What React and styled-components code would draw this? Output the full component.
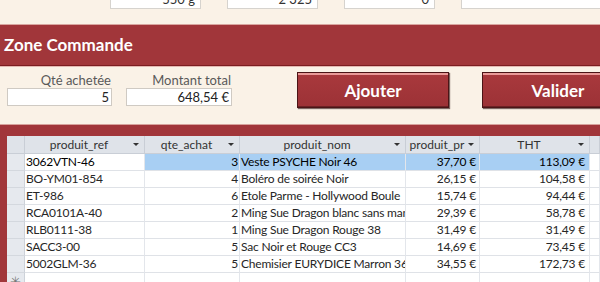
import styled, { createGlobalStyle } from "styled-components";

const GlobalStyle = createGlobalStyle`
  html, body {
    margin: 0;
    padding: 0;
    background: #faf2e7;
    overflow: hidden;
  }
  body {
    font-family: Lato, "Open Sans", sans-serif;
  }
`;

const Page = styled.div`
  width: 600px;
  height: 282px;
  overflow: hidden;
  background: #faf2e7;
`;

const TopStrip = styled.div`
  height: 9px;
  display: flex;
  align-items: flex-end;
  gap: 26px;
  padding-left: 110px;
  overflow: hidden;
`;

const TopBox = styled.div`
  flex: none;
  width: ${(p) => p.$width || 91}px;
  height: 20px;
  box-sizing: border-box;
  background: #fff;
  border: 1px solid #d6d3ce;
  font-size: 13px;
  line-height: 18px;
  text-align: right;
  padding-right: 5px;
  color: #333;
`;

const Band = styled.div`
  margin-top: 15px;
  height: 40px;
  background: #a1363a;
  border-top: 1px solid #d9a6a0;
  border-bottom: 1px solid #7c1d21;
  box-shadow: 0 1px 0 #e4b9b2;
  padding-left: 4px;
  color: #fff;
  font-size: 17px;
  font-weight: 700;
  line-height: 40px;
`;

const FormArea = styled.div`
  height: 52px;
  display: flex;
  align-items: flex-start;
  padding: 6px 0 0 7px;
`;

const Field = styled.div`
  flex: none;
  width: ${(p) => p.$width}px;
  margin-top: 1px;
  margin-right: ${(p) => p.$gap || 0}px;
  display: flex;
  flex-direction: column;
`;

const Label = styled.div`
  font-size: 13px;
  line-height: 14px;
  text-align: right;
  color: #595959;
  margin-bottom: 1px;
  padding-right: 1px;
`;

const Input = styled.div`
  height: 18px;
  box-sizing: border-box;
  background: #fff;
  border: 1px solid #cfcac3;
  font-size: 13px;
  line-height: 16px;
  text-align: right;
  padding-right: 2px;
  color: #222;
`;

const Buttons = styled.div`
  flex: none;
  display: flex;
  gap: 33px;
  margin-left: 65px;
`;

const Button = styled.button`
  flex: none;
  width: 152px;
  height: 36px;
  box-sizing: border-box;
  border: 1px solid #4b1416;
  background: linear-gradient(#a9393d, #9c3236);
  box-shadow: inset 0 2px 0 #e99a98, inset 0 -1px 0 #6b2224,
    1px 1px 1px rgba(40, 10, 10, 0.6);
  color: #fff;
  font-family: Lato, sans-serif;
  font-size: 17px;
  font-weight: 700;
  padding: 0;
  cursor: pointer;
`;

const TableSection = styled.div`
  height: 163px;
  box-sizing: border-box;
  background: #a1363a;
  border-top: 1px solid #d7a29c;
  padding: 11px 0 0 7px;
  overflow: hidden;
`;

const Sheet = styled.div`
  background: #fff;
  height: 100%;
  overflow: hidden;
`;

const COLS = "18px 120px 95px 166px 74px 110px 1fr";

const HeaderRow = styled.div`
  display: grid;
  grid-template-columns: ${COLS};
  height: 18px;
  background: #dfe3e9;
  border-bottom: 1px solid #c9ced6;
  box-sizing: border-box;
`;

const HeadCell = styled.div`
  display: flex;
  align-items: center;
  min-width: 0;
  border-right: 1px solid #c9ced6;
  font-size: 12px;
  color: #333;
  padding: 0 5px 0 3px;
`;

const HeadLabel = styled.span`
  flex: 1;
  min-width: 0;
  overflow: hidden;
  white-space: nowrap;
  text-align: center;
`;

const Arrow = styled.span`
  flex: none;
  width: 0;
  height: 0;
  margin-left: 3px;
  border-left: 3px solid transparent;
  border-right: 3px solid transparent;
  border-top: 3px solid #333;
`;

const Row = styled.div`
  display: grid;
  grid-template-columns: ${COLS};
  height: 17px;
`;

const Selector = styled.div`
  background: #e6e9ee;
  border-right: 1px solid #cdd2d9;
  border-bottom: 1px solid #d4d8de;
  display: flex;
  align-items: center;
  justify-content: center;
  color: #777;
  font-size: 13px;
`;

const Cell = styled.div`
  min-width: 0;
  overflow: hidden;
  white-space: nowrap;
  font-size: 12px;
  letter-spacing: -0.2px;
  line-height: 16px;
  color: ${(p) => (p.$current ? "#000" : "#262626")};
  background: ${(p) => (p.$selected ? "#a8cff3" : "#fff")};
  text-align: ${(p) => (p.$right ? "right" : "left")};
  padding: ${(p) => (p.$right ? `0 ${p.$pad ?? 1}px 0 0` : "0 0 0 1px")};
  border-right: 1px solid #e3e6eb;
  border-bottom: 1px solid #dfe2e7;
`;

const columns = ["produit_ref", "qte_achat", "produit_nom", "produit_pr", "THT"];

const rows = [
  ["3062VTN-46", "3", "Veste PSYCHE Noir 46", "37,70 €", "113,09 €"],
  ["BO-YM01-854", "4", "Boléro de soirée Noir", "26,15 €", "104,58 €"],
  ["ET-986", "6", "Etole Parme - Hollywood Boule", "15,74 €", "94,44 €"],
  ["RCA0101A-40", "2", "Ming Sue Dragon blanc sans manches", "29,39 €", "58,78 €"],
  ["RLB0111-38", "1", "Ming Sue Dragon Rouge 38", "31,49 €", "31,49 €"],
  ["SACC3-00", "5", "Sac Noir et Rouge CC3", "14,69 €", "73,45 €"],
  ["5002GLM-36", "5", "Chemisier EURYDICE Marron 36", "34,55 €", "172,73 €"],
];

export default function App() {
  return (
    <Page>
      <GlobalStyle />
      <TopStrip>
        <TopBox>550 g</TopBox>
        <TopBox>2 325</TopBox>
        <TopBox>0</TopBox>
        <TopBox $width={160} />
      </TopStrip>

      <Band>Zone Commande</Band>

      <FormArea>
        <Field $width={105} $gap={14}>
          <Label>Qté achetée</Label>
          <Input>5</Input>
        </Field>
        <Field $width={106}>
          <Label>Montant total</Label>
          <Input>648,54 €</Input>
        </Field>
        <Buttons>
          <Button>Ajouter</Button>
          <Button>Valider</Button>
        </Buttons>
      </FormArea>

      <TableSection>
        <Sheet>
          <HeaderRow>
            <HeadCell />
            {columns.map((c) => (
              <HeadCell key={c}>
                <HeadLabel>{c}</HeadLabel>
                <Arrow />
              </HeadCell>
            ))}
            <HeadCell />
          </HeaderRow>
          {rows.map((r, i) => {
            const sel = i === 0;
            return (
              <Row key={r[0]}>
                <Selector />
                <Cell $current={sel}>{r[0]}</Cell>
                <Cell $right $selected={sel} $current={sel}>
                  {r[1]}
                </Cell>
                <Cell $selected={sel} $current={sel}>
                  {r[2]}
                </Cell>
                <Cell $right $pad={3} $selected={sel} $current={sel}>
                  {r[3]}
                </Cell>
                <Cell $right $pad={4} $selected={sel} $current={sel}>
                  {r[4]}
                </Cell>
                <Cell />
              </Row>
            );
          })}
          <Row>
            <Selector>✳</Selector>
            <Cell />
            <Cell />
            <Cell />
            <Cell />
            <Cell />
            <Cell />
          </Row>
        </Sheet>
      </TableSection>
    </Page>
  );
}
